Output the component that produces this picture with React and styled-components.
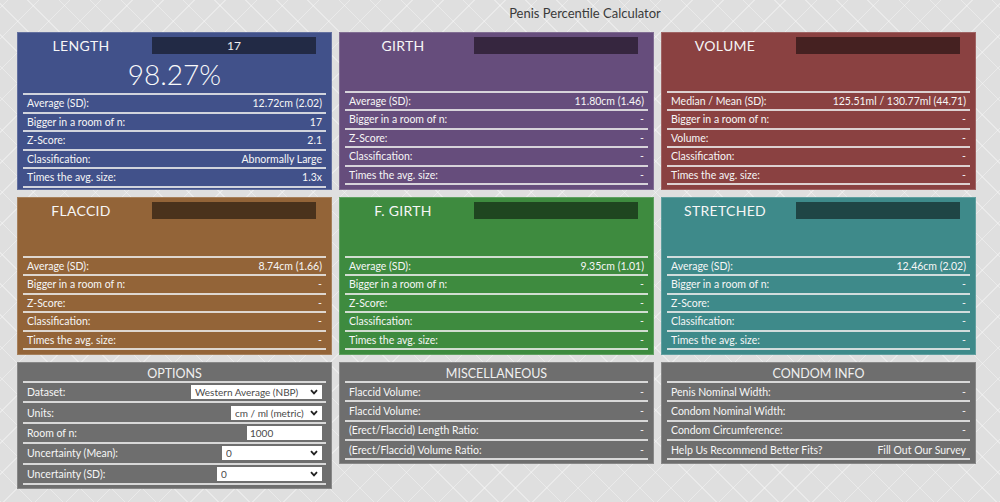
import React from "react";
import styled, { createGlobalStyle } from "styled-components";

const Global = createGlobalStyle`
  html, body { margin: 0; padding: 0; }
  body {
    font-family: Lato, "Open Sans", sans-serif;
    background-color: #dfdfdf;
    background-image:
      repeating-linear-gradient(45deg, rgba(255,255,255,0.35) 0 1px, transparent 1px 22px),
      repeating-linear-gradient(-45deg, rgba(255,255,255,0.35) 0 1px, transparent 1px 22px);
    width: 1000px;
    height: 502px;
    overflow: hidden;
  }
`;

const Page = styled.div`
  display: flex;
  flex-direction: column;
  padding: 0 24px 0 17px;
`;

const Title = styled.h1`
  margin: 0;
  height: 32px;
  line-height: 27px;
  padding-left: 177px;
  text-align: center;
  font-size: 13px;
  font-weight: 400;
  color: #3a3a3a;
`;

const Grid = styled.div`
  display: grid;
  grid-template-columns: repeat(3, 315px);
  grid-template-rows: 158px 158px auto;
  gap: 7px;
  align-items: start;
`;

const Panel = styled.section`
  box-sizing: border-box;
  height: ${(p) => (p.$fill ? "100%" : "auto")};
  background: ${(p) => p.$bg};
  border: 1px solid rgba(255, 255, 255, 0.18);
  padding: 0 5px ${(p) => (p.$fill ? 4 : 3)}px;
  color: #f6f6f6;
  display: flex;
  flex-direction: column;
`;

const Head = styled.div`
  display: grid;
  grid-template-columns: 116px 164px;
  column-gap: 13px;
  padding-top: 4px;
`;

const HeadTitle = styled.div`
  text-align: center;
  font-size: 14px;
  line-height: 18px;
  font-weight: 400;
  letter-spacing: 0.3px;
`;

const ValueBox = styled.div`
  height: 17px;
  line-height: 17px;
  background: ${(p) => p.$bg};
  text-align: center;
  font-size: 12px;
  color: #f0f0f0;
`;

const Big = styled.div`
  height: 39px;
  line-height: 38px;
  text-align: center;
  font-size: 28px;
  font-weight: 300;
  color: #fafafa;
`;

const List = styled.div`
  border-bottom: 2px solid rgba(235, 235, 235, 0.85);
`;

const Row = styled.div`
  display: flex;
  justify-content: space-between;
  align-items: center;
  height: ${(p) => p.$h}px;
  border-top: 2px solid rgba(235, 235, 235, 0.85);
  padding: 0 4px;
  font-size: 10.5px;
`;

const SubHead = styled.div`
  height: 18px;
  line-height: 21px;
  text-align: center;
  font-size: 12.5px;
  color: #f0f0f0;
`;

const SelectWrap = styled.div`
  position: relative;
  width: ${(p) => p.$w}px;
  height: 14px;
`;

const Select = styled.select`
  appearance: none;
  -webkit-appearance: none;
  box-sizing: border-box;
  width: 100%;
  height: 14px;
  border: none;
  border-radius: 0;
  background: #fff;
  color: #4a4a4a;
  font-family: Lato, sans-serif;
  font-size: 10px;
  line-height: 14px;
  padding: 0 12px 0 ${(p) => p.$pl}px;
  outline: none;
`;

const Chevron = styled.svg`
  position: absolute;
  right: 4px;
  top: 4px;
  width: 8px;
  height: 6px;
  pointer-events: none;
`;

const TextInput = styled.input`
  box-sizing: border-box;
  width: 75px;
  height: 14px;
  border: none;
  background: #fff;
  color: #4a4a4a;
  font-family: Lato, sans-serif;
  font-size: 10px;
  padding: 0 3px;
  outline: none;
`;

const LinkText = styled.span`
  color: #f4f4f4;
`;

const Dropdown = ({ w, pl = 4, value }) => (
  <SelectWrap $w={w}>
    <Select $pl={pl} defaultValue={value}>
      <option>{value}</option>
    </Select>
    <Chevron viewBox="0 0 8 6">
      <path d="M1 1.2 L4 4.4 L7 1.2" fill="none" stroke="#222" strokeWidth="1.8" />
    </Chevron>
  </SelectWrap>
);

const dash = "-";

const measures = [
  {
    name: "LENGTH",
    bg: "#41518a",
    box: "#222a45",
    value: "17",
    big: "98.27%",
    rows: [
      ["Average (SD):", "12.72cm (2.02)"],
      ["Bigger in a room of n:", "17"],
      ["Z-Score:", "2.1"],
      ["Classification:", "Abnormally Large"],
      ["Times the avg. size:", "1.3x"],
    ],
  },
  {
    name: "GIRTH",
    bg: "#664d7c",
    box: "#36263f",
    rows: [
      ["Average (SD):", "11.80cm (1.46)"],
      ["Bigger in a room of n:", dash],
      ["Z-Score:", dash],
      ["Classification:", dash],
      ["Times the avg. size:", dash],
    ],
  },
  {
    name: "VOLUME",
    bg: "#8a4141",
    box: "#452121",
    rows: [
      ["Median / Mean (SD):", "125.51ml / 130.77ml (44.71)"],
      ["Bigger in a room of n:", dash],
      ["Volume:", dash],
      ["Classification:", dash],
      ["Times the avg. size:", dash],
    ],
  },
  {
    name: "FLACCID",
    bg: "#936438",
    box: "#4a321c",
    rows: [
      ["Average (SD):", "8.74cm (1.66)"],
      ["Bigger in a room of n:", dash],
      ["Z-Score:", dash],
      ["Classification:", dash],
      ["Times the avg. size:", dash],
    ],
  },
  {
    name: "F. GIRTH",
    bg: "#3e8b3f",
    box: "#1f4620",
    rows: [
      ["Average (SD):", "9.35cm (1.01)"],
      ["Bigger in a room of n:", dash],
      ["Z-Score:", dash],
      ["Classification:", dash],
      ["Times the avg. size:", dash],
    ],
  },
  {
    name: "STRETCHED",
    bg: "#3e8a8a",
    box: "#1f4545",
    rows: [
      ["Average (SD):", "12.46cm (2.02)"],
      ["Bigger in a room of n:", dash],
      ["Z-Score:", dash],
      ["Classification:", dash],
      ["Times the avg. size:", dash],
    ],
  },
];

const GRAY = "#6e6e6e";

export default function App() {
  return (
    <>
      <Global />
      <Page>
        <Title>Penis Percentile Calculator</Title>
        <Grid>
          {measures.map((m) => (
            <Panel key={m.name} $bg={m.bg} $fill>
              <Head>
                <HeadTitle>{m.name}</HeadTitle>
                <ValueBox $bg={m.box}>{m.value || ""}</ValueBox>
              </Head>
              <Big>{m.big || ""}</Big>
              <List>
                {m.rows.map(([k, v], i) => (
                  <Row key={i} $h={16.5}>
                    <span>{k}</span>
                    <span>{v}</span>
                  </Row>
                ))}
              </List>
            </Panel>
          ))}

          <Panel $bg={GRAY}>
            <SubHead>OPTIONS</SubHead>
            <List>
              <Row $h={18.4}>
                <span>Dataset:</span>
                <Dropdown w={131} value="Western Average (NBP)" />
              </Row>
              <Row $h={18.4}>
                <span>Units:</span>
                <Dropdown w={91} value="cm / ml (metric)" />
              </Row>
              <Row $h={18.4}>
                <span>Room of n:</span>
                <TextInput defaultValue="1000" />
              </Row>
              <Row $h={18.4}>
                <span>Uncertainty (Mean):</span>
                <Dropdown w={100} value="0" />
              </Row>
              <Row $h={18.4}>
                <span>Uncertainty (SD):</span>
                <Dropdown w={105} value="0" />
              </Row>
            </List>
          </Panel>

          <Panel $bg={GRAY}>
            <SubHead>MISCELLANEOUS</SubHead>
            <List>
              <Row $h={17.3}><span>Flaccid Volume:</span><span>-</span></Row>
              <Row $h={17.3}><span>Flaccid Volume:</span><span>-</span></Row>
              <Row $h={17.3}><span>(Erect/Flaccid) Length Ratio:</span><span>-</span></Row>
              <Row $h={17.3}><span>(Erect/Flaccid) Volume Ratio:</span><span>-</span></Row>
            </List>
          </Panel>

          <Panel $bg={GRAY}>
            <SubHead>CONDOM INFO</SubHead>
            <List>
              <Row $h={17.3}><span>Penis Nominal Width:</span><span>-</span></Row>
              <Row $h={17.3}><span>Condom Nominal Width:</span><span>-</span></Row>
              <Row $h={17.3}><span>Condom Circumference:</span><span>-</span></Row>
              <Row $h={17.3}>
                <span>Help Us Recommend Better Fits?</span>
                <LinkText>Fill Out Our Survey</LinkText>
              </Row>
            </List>
          </Panel>
        </Grid>
      </Page>
    </>
  );
}
